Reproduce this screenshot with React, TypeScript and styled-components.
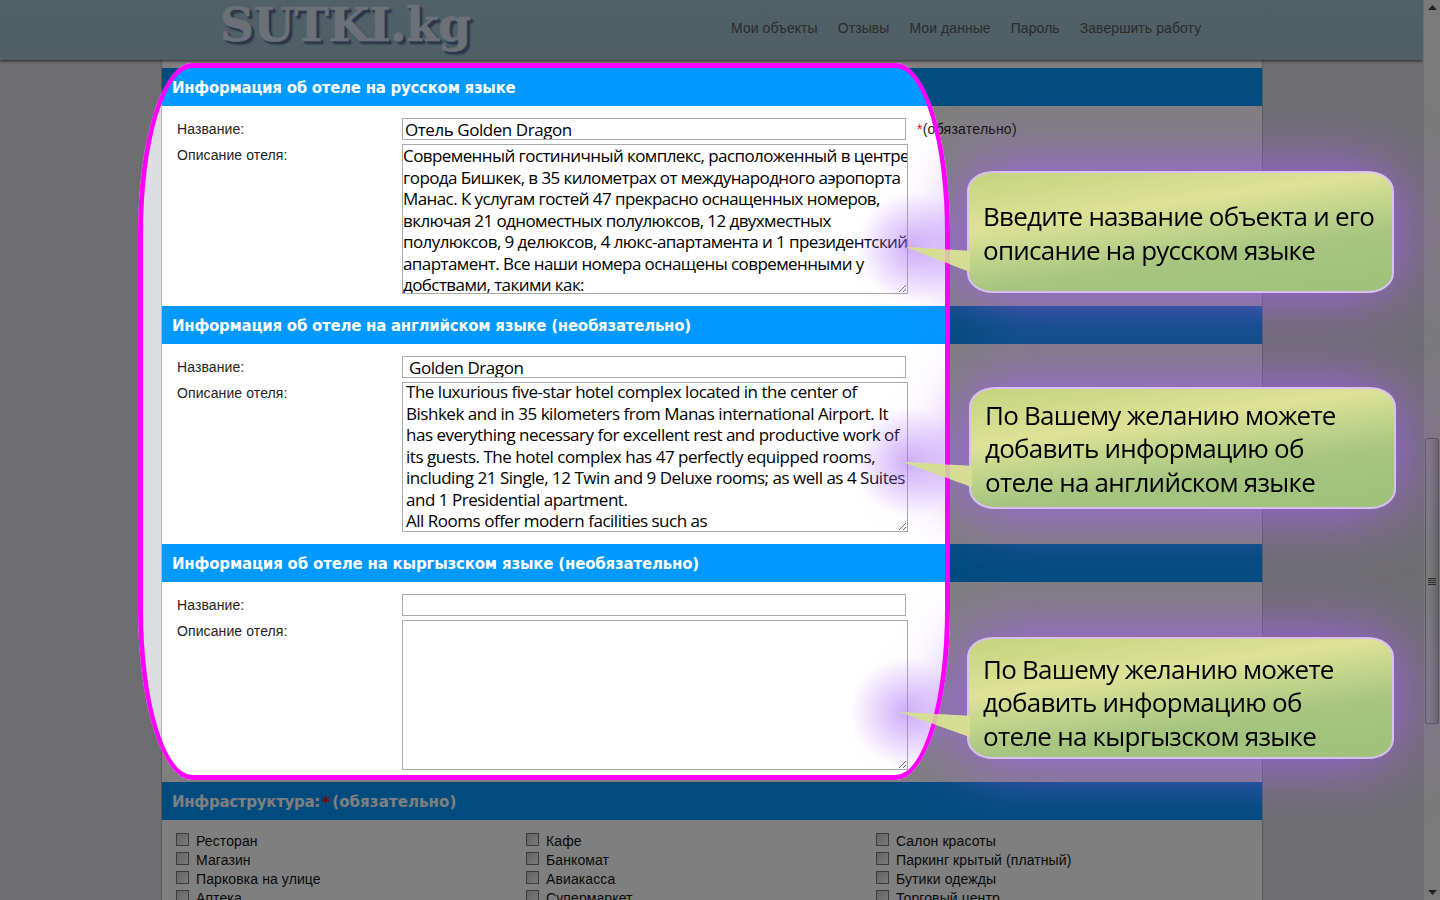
import React from "react";
import styled, { createGlobalStyle } from "styled-components";

const GlobalStyle = createGlobalStyle`
  html, body {
    margin: 0;
    padding: 0;
    height: 100%;
    overflow: hidden;
    background: #dcdde0;
    font-family: "Liberation Sans", Arial, sans-serif;
  }
`;

const Root = styled.div`
  position: relative;
  display: flex;
  width: 1440px;
  height: 900px;
  overflow: hidden;
`;

const Viewport = styled.div`
  width: 1423px;
  height: 900px;
  overflow: hidden;
  background: #dcdde0;
`;

const Header = styled.header`
  position: relative;
  z-index: 1;
  display: flex;
  align-items: center;
  height: 60px;
  padding-left: 220px;
  background: linear-gradient(#a2c2d0, #9dbeca);
  box-shadow: 0 1px 3px rgba(0, 0, 0, 0.7);
`;

const Logo = styled.div`
  width: 511px;
  height: 50px;
  margin-bottom: 10px;
  font-family: "DejaVu Serif", serif;
  font-weight: 700;
  font-size: 47px;
  line-height: 50px;
  letter-spacing: -0.5px;
  color: #d6e2ee;
  -webkit-text-stroke: 0.6px #d6e2ee;
  text-shadow: 1px 1px 0 #5b6f9c, 2px 2px 0 #5b6f9c, 3px 3px 2px #46577f;
`;

const Nav = styled.nav`
  display: flex;
  gap: 20px;
  margin-top: -4px;
`;

const NavLink = styled.a`
  font-size: 14px;
  letter-spacing: 0.07px;
  color: #5a5450;
`;

const Content = styled.main`
  width: 1100px;
  margin-left: 161px;
  padding-top: 8px;
  background: #fff;
  border-left: 1px solid #b4b4b4;
  border-right: 1px solid #b4b4b4;
`;

const SectionBar = styled.h2<{ $tracking?: number }>`
  box-sizing: border-box;
  display: flex;
  align-items: center;
  height: 38px;
  margin: 0;
  padding: 2px 0 0 10px;
  background: #0099ff;
  font-family: "DejaVu Sans", Verdana, sans-serif;
  font-weight: 700;
  font-size: 15px;
  letter-spacing: ${({ $tracking }) => $tracking ?? -0.28}px;
  color: #fff;
  white-space: pre;
`;

const Star = styled.span`
  color: #ff0000;
`;

const BarStar = styled(Star)`
  margin: 0 2px;
  font-size: 16px;
`;

const BarHint = styled.span`
  letter-spacing: 0.1px;
`;

const SectionBody = styled.div`
  display: grid;
  grid-template-columns: 225px 1fr;
  row-gap: 4px;
  padding: 12px 0 12px 15px;
`;

const Label = styled.label`
  padding-top: 3px;
  font-size: 14px;
  line-height: 16px;
  letter-spacing: 0.1px;
  color: #222;
`;

const FieldRow = styled.div`
  display: flex;
  align-items: center;
  gap: 11px;
`;

const Note = styled.span`
  font-size: 14px;
  letter-spacing: 0.25px;
  color: #222;
`;

const TextInput = styled.input`
  box-sizing: border-box;
  width: 504px;
  height: 22px;
  padding: 0 2px;
  border: 1px solid #aaa;
  outline: none;
  font-family: "Open Sans", sans-serif;
  font-size: 17px;
  letter-spacing: -0.45px;
  color: #000;
`;

const TextArea = styled.textarea<{ $inset: number; $tracking: number }>`
  display: block;
  box-sizing: border-box;
  width: 506px;
  height: 150px;
  padding: 0 0 0 ${({ $inset }) => $inset}px;
  border: 1px solid #aaa;
  outline: none;
  overflow: hidden;
  resize: both;
  white-space: pre;
  font-family: "Open Sans", sans-serif;
  font-size: 17px;
  line-height: 21.5px;
  letter-spacing: ${({ $tracking }) => $tracking}px;
  color: #000;
`;

const Checks = styled.div`
  display: grid;
  grid-template-columns: repeat(3, 350px);
  grid-auto-rows: 19px;
  padding: 11px 0 0 14px;
`;

const CheckRow = styled.label`
  display: flex;
  align-items: center;
  gap: 7px;
  font-size: 14px;
  letter-spacing: 0.1px;
  color: #111;
`;

const CheckBox = styled.input`
  appearance: none;
  width: 13px;
  height: 13px;
  margin: -2px 0 0 0;
  border: 1px solid #777;
  background: linear-gradient(135deg, #c8c8c8, #f4f4f4);
`;

const Scrollbar = styled.div`
  position: relative;
  box-sizing: border-box;
  width: 17px;
  height: 900px;
  background: #f4f4f4;
  border-left: 1px solid #dcdcdc;
`;

const ScrollThumb = styled.div`
  position: absolute;
  left: 1px;
  top: 438px;
  display: flex;
  align-items: center;
  justify-content: center;
  box-sizing: border-box;
  width: 14px;
  height: 286px;
  border: 1px solid #a8a8ae;
  border-radius: 2px;
  background: linear-gradient(90deg, #f8f8fc, #eeeef2 45%, #c8c8cc);
`;

const ScrollArrow = styled.svg<{ $bottom?: boolean }>`
  position: absolute;
  left: 4px;
  ${({ $bottom }) => ($bottom ? "bottom: 5px;" : "top: 5px;")}
`;

/* dims everything around the highlighted block, the hole follows the rounded frame */
const SpotlightDim = styled.div`
  position: absolute;
  z-index: 2;
  left: 138px;
  top: 63px;
  box-sizing: border-box;
  width: 812px;
  height: 717px;
  border-radius: 54px / 170px;
  box-shadow: 0 0 0 2000px rgba(0, 0, 0, 0.5);
  pointer-events: none;
`;

/* frame sits over the glow of the callouts, their tails go over it again */
const SpotlightFrame = styled(SpotlightDim)`
  z-index: 4;
  border: 5px solid #ff00ff;
  box-shadow: none;
`;

const Callout = styled.div<{ $left: number; $top: number }>`
  position: absolute;
  left: ${({ $left }) => $left}px;
  top: ${({ $top }) => $top}px;
`;

const TipGlow = styled.div<{ $tipX: number; $tipY: number }>`
  position: absolute;
  z-index: 3;
  left: ${({ $tipX }) => $tipX - 69 - 50}px;
  top: ${({ $tipY }) => $tipY + 70 - 55}px;
  width: 110px;
  height: 110px;
  background: radial-gradient(closest-side, rgba(165, 105, 245, 0.5), rgba(165, 105, 245, 0.25) 50%, rgba(165, 105, 245, 0));
`;

const CalloutShape = styled.div`
  position: relative;
  z-index: 3;
  filter: drop-shadow(0 0 32px rgb(165, 95, 245));
`;

const CalloutBody = styled.div<{ $shift: number }>`
  box-sizing: border-box;
  display: flex;
  align-items: center;
  width: 427px;
  height: 122px;
  padding: ${({ $shift }) => $shift}px 0 0 14px;
  border: 2px solid #d9c0f4;
  border-radius: 26px / 20px;
  background: linear-gradient(172deg, #c4d47e 0%, #dde297 33%, #a6c580 67%, #9dc27a 100%);
  font-family: "Open Sans", sans-serif;
  font-size: 26px;
  line-height: 33.6px;
  letter-spacing: -0.75px;
  color: #000;
  white-space: nowrap;
`;

const CalloutTail = styled.svg<{ $over?: boolean }>`
  position: absolute;
  z-index: ${({ $over }) => ($over ? 5 : "auto")};
  left: -69px;
  top: 70px;
  opacity: ${({ $over }) => ($over ? 0.88 : 1)};
`;

type CalloutProps = {
  left: number;
  top: number;
  shift: number;
  tipX: number;
  tipY: number;
  lines: string[];
};

const Bubble: React.FC<CalloutProps> = ({ left, top, shift, tipX, tipY, lines }) => {
  const tail = <polygon points={`${tipX},${tipY} 72,${tipY + 4} 72,${tipY + 25}`} fill="#d6de96" />;

  return (
    <Callout $left={left} $top={top}>
      <TipGlow $tipX={tipX} $tipY={tipY} />
      <CalloutShape>
        <CalloutBody $shift={shift}>
          <div>
            {lines.map((line, index) => (
              <div key={index}>{line}</div>
            ))}
          </div>
        </CalloutBody>
        <CalloutTail width="72" height="40" viewBox="0 0 72 40">
          {tail}
        </CalloutTail>
      </CalloutShape>
      <CalloutTail $over width="72" height="40" viewBox="0 0 72 40">
        {tail}
      </CalloutTail>
    </Callout>
  );
};

const russianText = `Современный гостиничный комплекс, расположенный в центре
города Бишкек, в 35 километрах от международного аэропорта
Манас. К услугам гостей 47 прекрасно оснащенных номеров,
включая 21 одноместных полулюксов, 12 двухместных
полулюксов, 9 делюксов, 4 люкс-апартамента и 1 президентский
апартамент. Все наши номера оснащены современными у
добствами, такими как:`;

const englishText = `The luxurious five-star hotel complex located in the center of
Bishkek and in 35 kilometers from Manas international Airport. It
has everything necessary for excellent rest and productive work of
its guests. The hotel complex has 47 perfectly equipped rooms,
including 21 Single, 12 Twin and 9 Deluxe rooms; as well as 4 Suites
and 1 Presidential apartment.
All Rooms offer modern facilities such as`;

const navItems = ["Мои объекты", "Отзывы", "Мои данные", "Пароль", "Завершить работу"];

const facilities = [
  "Ресторан", "Кафе", "Салон красоты",
  "Магазин", "Банкомат", "Паркинг крытый (платный)",
  "Парковка на улице", "Авиакасса", "Бутики одежды",
  "Аптека", "Супермаркет", "Торговый центр",
];

type SectionProps = {
  title: string;
  titleTracking?: number;
  name: string;
  description: string;
  inset: number;
  tracking: number;
  scrolled?: number;
  required?: boolean;
};

const HotelSection: React.FC<SectionProps> = ({
  title,
  titleTracking,
  name,
  description,
  inset,
  tracking,
  scrolled,
  required,
}) => {
  return (
    <section>
      <SectionBar $tracking={titleTracking}>{title}</SectionBar>
      <SectionBody>
        <Label>Название:</Label>
        <FieldRow>
          <TextInput defaultValue={name} />
          {required && (
            <Note>
              <Star>*</Star>(обязательно)
            </Note>
          )}
        </FieldRow>
        <Label>Описание отеля:</Label>
        <TextArea
          $inset={inset}
          $tracking={tracking}
          defaultValue={description}
          wrap="off"
          ref={(el) => {
            if (el && scrolled) el.scrollTop = scrolled;
          }}
        />
      </SectionBody>
    </section>
  );
};

const App = () => {
  return (
    <Root>
      <GlobalStyle />
      <Viewport>
        <Header>
          <Logo>SUTKI.kg</Logo>
          <Nav>
            {navItems.map((item) => (
              <NavLink key={item}>{item}</NavLink>
            ))}
          </Nav>
        </Header>
        <Content>
          <HotelSection
            title="Информация об отеле на русском языке"
            name="Отель Golden Dragon"
            description={russianText}
            inset={0}
            tracking={-0.58}
            required
          />
          <HotelSection
            title="Информация об отеле на английском языке (необязательно)"
            titleTracking={-0.26}
            name=" Golden Dragon"
            description={englishText}
            inset={3}
            tracking={-0.48}
            scrolled={2}
          />
          <HotelSection
            title="Информация об отеле на кыргызском языке (необязательно)"
            titleTracking={-0.19}
            name=""
            description=""
            inset={1}
            tracking={-0.5}
          />
          <SectionBar>
            Инфраструктура:<BarStar>*</BarStar>
            <BarHint>(обязательно)</BarHint>
          </SectionBar>
          <Checks>
            {facilities.map((item) => (
              <CheckRow key={item}>
                <CheckBox type="checkbox" />
                {item}
              </CheckRow>
            ))}
          </Checks>
        </Content>
      </Viewport>
      <Scrollbar>
        <ScrollArrow width="9" height="5" viewBox="0 0 9 5">
          <polygon points="4.5,0 9,5 0,5" fill="#444" />
        </ScrollArrow>
        <ScrollThumb>
          <svg width="8" height="7" viewBox="0 0 8 7">
            <path d="M0 .5H8M0 2.5H8M0 4.5H8M0 6.5H8" stroke="#555" />
          </svg>
        </ScrollThumb>
        <ScrollArrow $bottom width="9" height="5" viewBox="0 0 9 5">
          <polygon points="0,0 9,0 4.5,5" fill="#444" />
        </ScrollArrow>
      </Scrollbar>
      <SpotlightDim />
      <SpotlightFrame />
      <Bubble
        left={967}
        top={171}
        shift={4}
        tipX={8}
        tipY={6}
        lines={["Введите название объекта и его", "описание на русском языке"]}
      />
      <Bubble
        left={969}
        top={387}
        shift={2}
        tipX={3}
        tipY={5}
        lines={["По Вашему желанию можете", "добавить информацию об", "отеле на английском языке"]}
      />
      <Bubble
        left={967}
        top={637}
        shift={10}
        tipX={2}
        tipY={5}
        lines={["По Вашему желанию можете", "добавить информацию об", "отеле на кыргызском языке"]}
      />
    </Root>
  );
};

export default App;
